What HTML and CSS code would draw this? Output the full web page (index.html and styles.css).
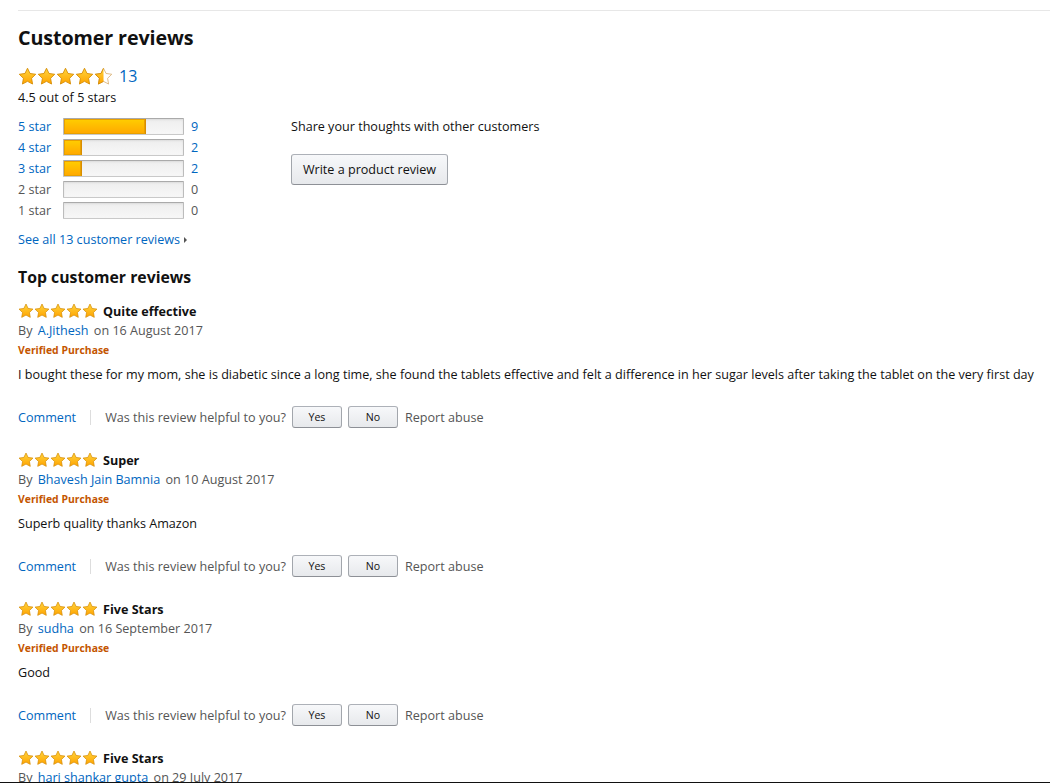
FILE: index.html
```html
<!DOCTYPE html>
<html>
<head>
<meta charset="utf-8">
<link rel="stylesheet" href="styles.css">
</head>
<body>
<svg class="defs" width="0" height="0" aria-hidden="true">
  <defs>
    <linearGradient id="gold" x1="0" y1="0" x2="0" y2="1">
      <stop offset="0" stop-color="#ffd53e"/>
      <stop offset="1" stop-color="#ffa300"/>
    </linearGradient>
    <clipPath id="lefthalf"><rect x="0" y="0" width="10" height="20"/></clipPath>
    <symbol id="star" viewBox="0 0 20 20">
      <path d="M10 1.3l2.65 5.5 6.05.85-4.4 4.25 1.05 6.05L10 15.1l-5.35 2.85 1.05-6.05L1.3 7.65l6.05-.85z" fill="url(#gold)" stroke="#d48a00" stroke-width="0.9" stroke-linejoin="round"/>
    </symbol>
    <symbol id="halfstar" viewBox="0 0 20 20">
      <path d="M10 1.3l2.65 5.5 6.05.85-4.4 4.25 1.05 6.05L10 15.1l-5.35 2.85 1.05-6.05L1.3 7.65l6.05-.85z" fill="#fff" stroke="#d9b276" stroke-width="0.9" stroke-linejoin="round"/>
      <path d="M10 1.3l2.65 5.5 6.05.85-4.4 4.25 1.05 6.05L10 15.1l-5.35 2.85 1.05-6.05L1.3 7.65l6.05-.85z" fill="url(#gold)" stroke="#d48a00" stroke-width="0.9" stroke-linejoin="round" clip-path="url(#lefthalf)"/>
    </symbol>
  </defs>
</svg>

<div class="page">
  <div class="topline"></div>

  <h2 class="title">Customer reviews</h2>

  <div class="summary">
    <span class="stars big">
      <svg><use href="#star"/></svg><svg><use href="#star"/></svg><svg><use href="#star"/></svg><svg><use href="#star"/></svg><svg><use href="#halfstar"/></svg>
    </span>
    <a class="count-link">13</a>
  </div>
  <div class="out-of">4.5 out of 5 stars</div>

  <div class="overview">
    <div class="histogram">
      <a class="h-label link">5 star</a>
      <div class="bar"><div class="fill" style="width:69%"></div></div>
      <a class="h-count link">9</a>

      <a class="h-label link">4 star</a>
      <div class="bar"><div class="fill" style="width:15%"></div></div>
      <a class="h-count link">2</a>

      <a class="h-label link">3 star</a>
      <div class="bar"><div class="fill" style="width:15%"></div></div>
      <a class="h-count link">2</a>

      <span class="h-label muted">2 star</span>
      <div class="bar"></div>
      <span class="h-count muted">0</span>

      <span class="h-label muted">1 star</span>
      <div class="bar"></div>
      <span class="h-count muted">0</span>
    </div>

    <div class="share">
      <div class="share-text">Share your thoughts with other customers</div>
      <button class="btn write">Write a product review</button>
    </div>
  </div>

  <a class="see-all link">See all 13 customer reviews <span class="caret"></span></a>

  <h3 class="subtitle">Top customer reviews</h3>

  <div class="review">
    <div class="r-head">
      <span class="stars small"><svg><use href="#star"/></svg><svg><use href="#star"/></svg><svg><use href="#star"/></svg><svg><use href="#star"/></svg><svg><use href="#star"/></svg></span>
      <span class="r-title">Quite effective</span>
    </div>
    <div class="r-by">By <a class="link">A.Jithesh</a> on 16 August 2017</div>
    <div class="verified">Verified Purchase</div>
    <div class="r-body">I bought these for my mom, she is diabetic since a long time, she found the tablets effective and felt a difference in her sugar levels after taking the tablet on the very first day</div>
    <div class="r-actions">
      <a class="link">Comment</a>
      <span class="sep"></span>
      <span class="muted">Was this review helpful to you?</span>
      <button class="btn small-btn">Yes</button>
      <button class="btn small-btn">No</button>
      <span class="muted">Report abuse</span>
    </div>
  </div>

  <div class="review">
    <div class="r-head">
      <span class="stars small"><svg><use href="#star"/></svg><svg><use href="#star"/></svg><svg><use href="#star"/></svg><svg><use href="#star"/></svg><svg><use href="#star"/></svg></span>
      <span class="r-title">Super</span>
    </div>
    <div class="r-by">By <a class="link">Bhavesh Jain Bamnia</a> on 10 August 2017</div>
    <div class="verified">Verified Purchase</div>
    <div class="r-body">Superb quality thanks Amazon</div>
    <div class="r-actions">
      <a class="link">Comment</a>
      <span class="sep"></span>
      <span class="muted">Was this review helpful to you?</span>
      <button class="btn small-btn">Yes</button>
      <button class="btn small-btn">No</button>
      <span class="muted">Report abuse</span>
    </div>
  </div>

  <div class="review">
    <div class="r-head">
      <span class="stars small"><svg><use href="#star"/></svg><svg><use href="#star"/></svg><svg><use href="#star"/></svg><svg><use href="#star"/></svg><svg><use href="#star"/></svg></span>
      <span class="r-title">Five Stars</span>
    </div>
    <div class="r-by">By <a class="link">sudha</a> on 16 September 2017</div>
    <div class="verified">Verified Purchase</div>
    <div class="r-body">Good</div>
    <div class="r-actions">
      <a class="link">Comment</a>
      <span class="sep"></span>
      <span class="muted">Was this review helpful to you?</span>
      <button class="btn small-btn">Yes</button>
      <button class="btn small-btn">No</button>
      <span class="muted">Report abuse</span>
    </div>
  </div>

  <div class="review">
    <div class="r-head">
      <span class="stars small"><svg><use href="#star"/></svg><svg><use href="#star"/></svg><svg><use href="#star"/></svg><svg><use href="#star"/></svg><svg><use href="#star"/></svg></span>
      <span class="r-title">Five Stars</span>
    </div>
    <div class="r-by">By <a class="link">hari shankar gupta</a> on 29 July 2017</div>
  </div>
</div>
<div class="bottom-edge"></div>
</body>
</html>
```

FILE: styles.css
```css
html, body {
  margin: 0;
  padding: 0;
  background: #fff;
  overflow: hidden;
}
body {
  font-family: "Open Sans", "Noto Sans", "DejaVu Sans", sans-serif;
  font-size: 12.6px;
  color: #111;
  height: 783px;
}
.defs {
  position: absolute;
  width: 0;
  height: 0;
}
.page {
  padding-left: 18px;
}
.topline {
  margin-top: 10px;
  border-top: 1px solid #e7e7e7;
}
.link {
  color: #0066c0;
  text-decoration: none;
}
.muted {
  color: #555;
}
.title {
  margin: 12px 0 0;
  font-size: 19.7px;
  font-weight: 700;
  line-height: 30px;
  letter-spacing: -0.1px;
}
.summary {
  display: flex;
  align-items: center;
  margin-top: 12px;
  height: 22px;
}
.stars {
  display: inline-flex;
}
.stars svg {
  display: block;
}
.stars.big svg {
  width: 19px;
  height: 19px;
}
.count-link {
  color: #0066c0;
  font-size: 16px;
  margin-left: 6px;
  line-height: 22px;
}
.out-of {
  margin-top: 2px;
  line-height: 18px;
}
.overview {
  display: flex;
  margin-top: 9px;
}
.histogram {
  display: grid;
  grid-template-columns: 45px 121px 20px;
  grid-auto-rows: 21px;
  align-items: center;
  width: 273px;
}
.h-count {
  padding-left: 7px;
}
.bar {
  border: 1px solid;
  border-color: #aaa #bcbcbc #c9c9c9;
  border-radius: 1px;
  background: linear-gradient(#eee, #f7f7f7);
  box-shadow: inset 0 1px 2px rgba(0,0,0,0.08);
  box-sizing: border-box;
  height: 17px;
  overflow: hidden;
}
.fill {
  height: 100%;
  background: linear-gradient(#ffce00, #ffa700);
  border-right: 1px solid #d88d00;
  box-shadow: inset 0 0 0 1px #e8a000;
  box-sizing: border-box;
}
.share-text {
  line-height: 21px;
}
.btn {
  font-family: inherit;
  color: #111;
  background: linear-gradient(#f7f8fa, #e7e9ec);
  border: 1px solid;
  border-color: #adb1b8 #a2a6ac #8d9096;
  border-radius: 3px;
  cursor: pointer;
  padding: 0;
}
.write {
  margin-top: 17px;
  height: 31px;
  width: 157px;
  font-size: 12.6px;
}
.see-all {
  display: inline-block;
  margin-top: 9px;
  line-height: 20px;
}
.caret {
  display: inline-block;
  width: 0;
  height: 0;
  border-left: 3px solid #555;
  border-top: 3px solid transparent;
  border-bottom: 3px solid transparent;
  margin-left: 1px;
  vertical-align: 1px;
}
.subtitle {
  margin: 15px 0 0;
  font-size: 15.8px;
  font-weight: 700;
  line-height: 24px;
}
.review {
  margin-top: 13px;
}
.review + .review {
  margin-top: 22px;
}
.r-head {
  display: flex;
  align-items: center;
  height: 18px;
}
.stars.small svg {
  width: 16px;
  height: 16px;
}
.r-title {
  font-weight: 700;
  margin-left: 5px;
}
.r-by {
  color: #555;
  line-height: 20px;
  margin-top: 1px;
}
.r-by .link {
  margin: 0 2px;
}
.verified {
  color: #c45500;
  font-weight: 700;
  font-size: 10.4px;
  line-height: 20px;
  margin-top: -1px;
}
.r-body {
  margin-top: 4px;
  line-height: 22px;
  white-space: nowrap;
}
.r-actions {
  display: flex;
  align-items: center;
  margin-top: 19px;
  height: 24px;
}
.sep {
  width: 1px;
  height: 15px;
  background: #ddd;
  margin: 0 14px;
}
.small-btn {
  width: 50px;
  height: 22px;
  font-size: 10.6px;
  margin-left: 6px;
}
.small-btn + .small-btn {
  margin-left: 6px;
}
.small-btn + .muted {
  margin-left: 7px;
}
.bottom-edge {
  position: fixed;
  left: 0;
  right: 0;
  bottom: 0;
  height: 1px;
  background: #111;
}
```
